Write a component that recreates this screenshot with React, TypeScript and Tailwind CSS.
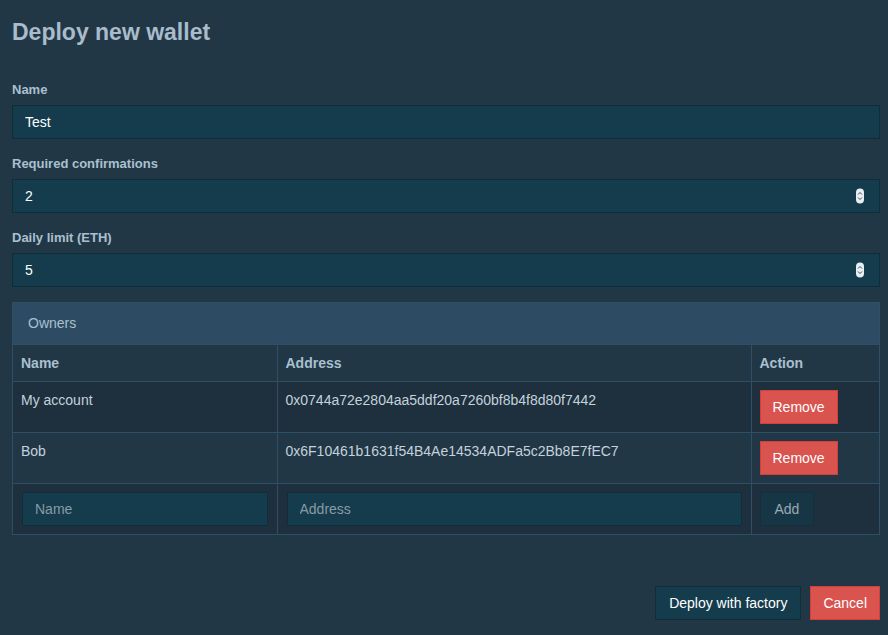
import React from "react";

type Owner = {
  name: string;
  address: string;
};

const owners: Owner[] = [
  { name: "My account", address: "0x0744a72e2804aa5ddf20a7260bf8b4f8d80f7442" },
  { name: "Bob", address: "0x6F10461b1631f54B4Ae14534ADFa5c2Bb8E7fEC7" },
];

const Spinner = () => (
  <span className="absolute right-[16px] top-1/2 -translate-y-1/2 flex flex-col items-center justify-center w-[8px] h-[15px] rounded-[4px] bg-[#e8eef2]">
    <svg width="6" height="11" viewBox="0 0 6 11">
      <path d="M1 4 L3 2 L5 4" stroke="#3a4a55" strokeWidth="1" fill="none" />
      <path d="M1 7 L3 9 L5 7" stroke="#3a4a55" strokeWidth="1" fill="none" />
    </svg>
  </span>
);

const Field = (props: { label: string; value: string; number?: boolean }) => (
  <div className="mb-[15px]">
    <label className="block text-[13px] leading-[20px] font-bold text-[#a9c0d0] mb-[5px]">
      {props.label}
    </label>
    <div className="relative">
      <input
        readOnly
        value={props.value}
        className="w-full h-[34px] px-[12px] bg-[#143c4c] border border-[#0f2e3b] text-white text-[14px] outline-none"
      />
      {props.number && <Spinner />}
    </div>
  </div>
);

export default function App() {
  return (
    <div
      className="w-[888px] h-[635px] bg-[#223746] flex flex-col overflow-hidden"
      style={{ fontFamily: '"Liberation Sans", Arial, sans-serif' }}
    >
      <div className="pl-[12px] pr-[8px] pt-[17px] flex-1">
        <h1 className="text-[23px] leading-[30px] font-bold text-[#a9bccb] mb-[33px]">
          Deploy new wallet
        </h1>

        <Field label="Name" value="Test" />
        <Field label="Required confirmations" value="2" number />
        <Field label="Daily limit (ETH)" value="5" number />

        <div className="border border-[#2f4f66]">
          <div className="bg-[#2d4c63] px-[15px] py-[10px] text-[14px] leading-[21px] text-[#a9c0d0]">
            Owners
          </div>
          <table className="w-full border-collapse text-[14px] leading-[20px]">
            <thead>
              <tr className="bg-[#223746]">
                <th className="w-[264px] text-left font-bold text-[#a9c0d0] px-[8px] py-[8px] border-t border-r border-[#2f4f66]">
                  Name
                </th>
                <th className="text-left font-bold text-[#a9c0d0] px-[8px] py-[8px] border-t border-r border-[#2f4f66]">
                  Address
                </th>
                <th className="w-[128px] text-left font-bold text-[#a9c0d0] px-[8px] py-[8px] border-t border-[#2f4f66]">
                  Action
                </th>
              </tr>
            </thead>
            <tbody>
              {owners.map((o, i) => (
                <tr key={o.address} className={i % 2 === 0 ? "bg-[#1e2f3d]" : "bg-[#223746]"}>
                  <td className="align-top text-[#c3d2dc] px-[8px] py-[8px] border-t border-r border-[#2f4f66]">
                    {o.name}
                  </td>
                  <td className="align-top text-[#c3d2dc] px-[8px] py-[8px] border-t border-r border-[#2f4f66]">
                    {o.address}
                  </td>
                  <td className="align-top px-[8px] py-[8px] border-t border-[#2f4f66]">
                    <button className="h-[34px] px-[12px] bg-[#d9534f] border border-[#d43f3a] text-white text-[14px]">
                      Remove
                    </button>
                  </td>
                </tr>
              ))}
              <tr className="bg-[#1e2f3d]">
                <td className="px-[9px] py-[8px] border-t border-r border-[#2f4f66]">
                  <input
                    placeholder="Name"
                    className="w-full h-[34px] px-[12px] bg-[#143c4c] border border-[#0f2e3b] text-white placeholder:text-[#8a9aa4] text-[14px] outline-none"
                  />
                </td>
                <td className="px-[9px] py-[8px] border-t border-r border-[#2f4f66]">
                  <input
                    placeholder="Address"
                    className="w-full h-[34px] px-[12px] bg-[#143c4c] border border-[#0f2e3b] text-white placeholder:text-[#8a9aa4] text-[14px] outline-none"
                  />
                </td>
                <td className="px-[8px] py-[8px] border-t border-[#2f4f66]">
                  <button className="h-[34px] px-[14px] bg-[#163646] border border-[#13303e] text-[#9aa9b3] text-[14px]">
                    Add
                  </button>
                </td>
              </tr>
            </tbody>
          </table>
        </div>
      </div>

      <div className="border-t border-[#183a4a] px-[8px] pt-[15px] pb-[15px] flex justify-end gap-[9px]">
        <button className="h-[34px] px-[13px] bg-[#143c4c] border border-[#0f2e3b] text-white text-[14px]">
          Deploy with factory
        </button>
        <button className="h-[34px] px-[12px] bg-[#d9534f] border border-[#d43f3a] text-white text-[14px]">
          Cancel
        </button>
      </div>
    </div>
  );
}
